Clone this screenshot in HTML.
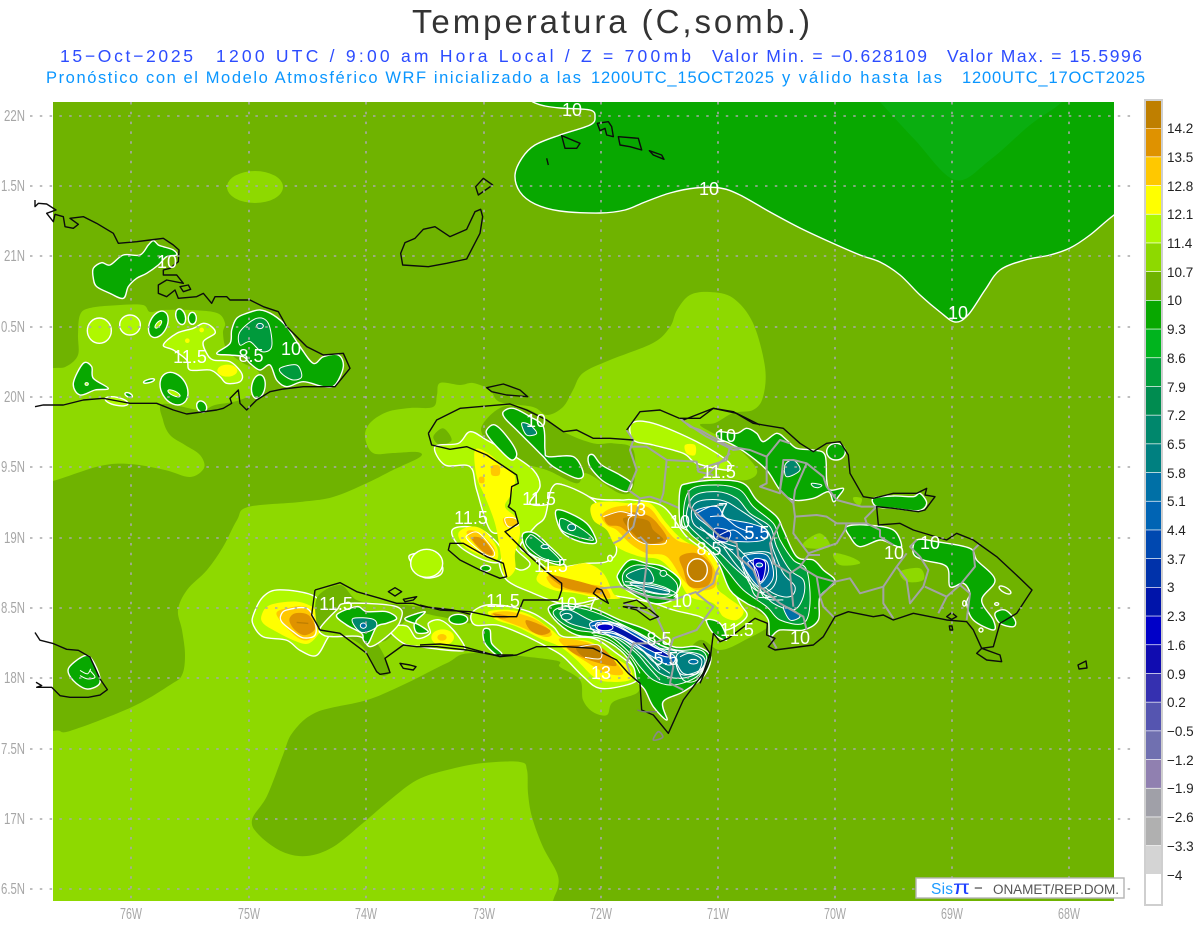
<!DOCTYPE html>
<html><head><meta charset="utf-8"><title>Temperatura</title>
<style>
html,body{margin:0;padding:0;background:#fff;width:1200px;height:927px;overflow:hidden}
svg{display:block}
text{font-family:"Liberation Sans",sans-serif}
.w polygon,.w polyline,.w ellipse,.w path{stroke:#fff;stroke-width:1.4;stroke-linejoin:round;vector-effect:non-scaling-stroke}
.n polygon,.n ellipse,.n path{stroke:none}
.t polygon,.t polyline,.t ellipse,.t path{stroke:#fff;stroke-width:1;fill-opacity:1;stroke-linejoin:round;vector-effect:non-scaling-stroke}
.l polyline,.l path,.l polygon{fill:none;stroke:#fff;stroke-width:1;vector-effect:non-scaling-stroke;stroke-linejoin:round}
.r polyline{fill:none;stroke:#a3a3a3;stroke-width:2;vector-effect:non-scaling-stroke;stroke-linejoin:round}
.k polyline,.k polygon{fill:none;stroke:#0c0c0c;stroke-width:1.4;vector-effect:non-scaling-stroke;stroke-linejoin:round}
.lb text{fill:#fff;font-size:18px;text-anchor:middle}
.ax text{fill:#a6a6a6;font-size:16px}
.cb text{fill:#222;font-size:13.5px}
</style></head><body>
<svg width="1200" height="927" viewBox="0 0 1200 927" xmlns="http://www.w3.org/2000/svg">
<defs><clipPath id="m"><rect x="53" y="102" width="1061" height="799"/></clipPath></defs>
<rect width="1200" height="927" fill="#fff"/>
<text x="412" y="33" font-size="33" fill="#333" textLength="398" lengthAdjust="spacing">Temperatura (C,somb.)</text>
<g font-size="17.5" fill="#2c4cff">
<text x="60" y="62" textLength="133" lengthAdjust="spacing">15−Oct−2025</text>
<text x="216" y="62" textLength="475" lengthAdjust="spacing">1200 UTC / 9:00 am Hora Local / Z = 700mb</text>
<text x="712" y="62" textLength="215" lengthAdjust="spacing">Valor Min. = −0.628109</text>
<text x="947" y="62" textLength="195" lengthAdjust="spacing">Valor Max. = 15.5996</text>
</g>
<g font-size="16.5" fill="#0a96ff">
<text x="46" y="83" textLength="535" lengthAdjust="spacing">Pronóstico con el Modelo Atmosférico WRF inicializado a las</text>
<text x="591" y="83" textLength="183" lengthAdjust="spacing">1200UTC_15OCT2025</text>
<text x="782" y="83" textLength="160" lengthAdjust="spacing">y válido hasta las</text>
<text x="962" y="83" textLength="183" lengthAdjust="spacing">1200UTC_17OCT2025</text>
</g>

<!-- map base -->
<rect x="53" y="102" width="1061" height="799" fill="#6fb300"/>
<g clip-path="url(#m)">
<polygon fill="#08a800" points="520,92 533,102 545,106 560,108 590,110 595,117 590,125 560,135 535,145 522,158 515,175 520,192 535,204 560,211 600,213 625,210 645,202 670,193 695,188 720,188 740,195 770,212 800,228 830,242 860,255 880,262 900,275 920,295 940,312 955,322 968,315 985,290 1000,270 1025,260 1050,255 1070,248 1090,235 1114,215 1150,190 1150,60 520,60"/>
<polygon fill="#0aae10" points="850,70 880,102 915,140 955,180 990,160 1030,125 1062,102 1090,70"/>
<polyline fill="none" stroke="#fff" stroke-width="1.4" points="520,92 533,102 545,106 560,108 590,110 595,117 590,125 560,135 535,145 522,158 515,175 520,192 535,204 560,211 600,213 625,210 645,202 670,193 695,188 720,188 740,195 770,212 800,228 830,242 860,255 880,262 900,275 920,295 940,312 955,322 968,315 985,290 1000,270 1025,260 1050,255 1070,248 1090,235 1114,215 1150,190"/>

<!-- light region -->
<g fill="#8ed900">
<ellipse cx="255" cy="187" rx="28" ry="16"/>
<polygon points="0,368 53,368 67,366 78,355 78,335 80,315 90,308 120,305 143,305 150,312 163,310 190,310 217,313 225,323 223,333 227,350 243,363 257,370 263,387 240,400 215,405 200,410 163,404 163,420 170,435 185,445 200,455 204,468 190,477 165,470 130,464 100,466 53,481 0,495"/>
<polygon points="0,745 53,731 70,731 132,707 170,685 182,675 185,655 182,630 178,610 187,590 207,570 223,547 237,520 248,507 300,502 333,497 367,483 393,470 420,457 417,452 393,453 373,453 365,437 370,423 387,412 410,408 433,407 437,395 440,383 460,385 473,383 490,390 500,402 533,407 547,415 563,407 573,390 583,373 610,360 653,343 670,327 677,310 690,295 710,292 733,298 753,323 765,367 763,397 753,410 733,413 715,423 700,425 720,437 740,450 757,470 747,480 717,482 700,520 718,563 747,603 770,623 745,640 720,650 700,640 680,660 655,680 643,680 637,693 613,702 607,715 593,712 583,700 580,680 560,667 553,660 473,653 447,663 407,683 367,700 317,712 293,732 283,755 267,796 252,820 260,836 283,852 307,856 333,847 363,823 390,800 417,780 447,770 483,763 520,762 527,770 528,793 532,817 543,847 557,873 558,887 553,901 548,925 0,925"/>
</g>
</g>

<!-- Cuba -->
<g transform="translate(30,190) scale(.33333)">
<g class="w">
<polygon fill="#08a800" points="190,235 215,218 240,225 280,195 330,195 355,165 370,152 385,165 400,170 430,180 440,195 410,200 385,225 350,250 320,265 295,290 280,325 240,310 200,290 190,265"/>
<ellipse fill="#aff800" cx="208" cy="422" rx="36" ry="38"/>
<ellipse fill="#aff800" cx="300" cy="405" rx="31" ry="30"/>
<ellipse fill="#08a800" cx="385" cy="403" rx="26" ry="42" transform="rotate(25 385 403)"/>
<ellipse fill="#08a800" cx="452" cy="380" rx="14" ry="24" transform="rotate(-15 452 380)"/>
<ellipse fill="#08a800" cx="487" cy="385" rx="12" ry="18"/>
<polygon fill="#aff800" points="400,465 440,430 490,415 520,400 545,410 555,430 520,455 530,490 550,510 600,515 635,550 630,575 590,580 570,560 540,540 480,540 470,510 430,480"/>
</g>
<g class="n" fill="#ffff00"><ellipse cx="592" cy="542" rx="30" ry="18"/><ellipse cx="472" cy="452" rx="7" ry="7"/><ellipse cx="515" cy="420" rx="7" ry="7"/></g>
<g class="w">
<polygon fill="#08a800" points="560,490 600,460 605,420 620,385 650,370 690,360 730,375 770,410 810,470 850,520 880,500 925,495 940,530 915,585 880,590 820,575 770,590 740,570 720,525 690,540 660,520 640,500 600,495"/>
<polygon fill="#08a800" points="130,580 160,520 185,530 190,565 235,595 195,600 150,615"/>
<ellipse fill="#08a800" cx="432" cy="596" rx="38" ry="52" transform="rotate(-30 432 596)"/>
<ellipse fill="#08a800" cx="685" cy="590" rx="20" ry="36" transform="rotate(10 685 590)"/>
<ellipse fill="#08a800" cx="515" cy="650" rx="14" ry="18" transform="rotate(-30 515 650)"/>
<ellipse fill="#08a800" cx="357" cy="573" rx="17" ry="5" transform="rotate(-15 357 573)"/>
<ellipse fill="#08a800" cx="296" cy="615" rx="12" ry="6" transform="rotate(25 296 615)"/>
<ellipse fill="#aff800" cx="260" cy="634" rx="35" ry="12" transform="rotate(12 260 634)"/>
</g>
<g class="t">
<polygon fill="#009a3c" points="630,425 680,385 715,400 725,470 695,485 660,455 630,465"/>
<polygon fill="#009a3c" points="750,535 800,525 815,560 790,570 760,555"/>
<ellipse fill="#00876c" cx="690" cy="408" rx="10" ry="8"/>
<ellipse fill="#aff800" cx="432" cy="610" rx="20" ry="7" transform="rotate(25 432 610)"/>
<ellipse fill="#aff800" cx="385" cy="403" rx="6" ry="14" transform="rotate(40 385 403)"/>
<ellipse fill="#aff800" cx="170" cy="582" rx="5" ry="4"/>
</g>
<g class="k"><polyline points="15,30 15,50 25,40 50,42 78,60 50,70 70,95 75,73 100,80 105,110 130,115 145,103 120,85 160,80 200,100 250,130 265,160 320,155 360,150 400,145 430,165 447,180 445,215 420,235 400,240 400,255 440,255 460,280 410,270 385,285 385,310 410,320 435,300 445,325 500,320 520,310 545,340 555,320 590,320 600,330 660,330 700,350 745,365 770,410 830,470 880,495 940,490 960,535 915,590 820,590 760,597 720,605 680,630 650,660 630,640 625,600 600,625 605,640 580,655 560,660 470,672 430,660 380,640 300,640 220,625 160,630 100,645 40,645 15,650"/>
<polygon points="450,290 475,285 482,298 460,305"/></g>
</g>

<!-- Jamaica -->
<g transform="translate(0,400) scale(.33333,.336)">
<g class="w"><polygon fill="#08a800" points="205,800 245,765 270,765 295,810 298,845 260,860 220,835"/></g>
<g class="l"><polyline points="240,805 262,815 272,800"/><polyline points="240,820 262,830 285,825 270,805"/></g>
<g class="k"><polyline points="105,692 120,715 160,725 200,742 235,745 270,765 300,830 322,862 300,878 265,885 210,885 180,880 155,855 110,855 125,850 108,840"/></g>
</g>

<!-- SW Haiti -->
<g transform="translate(0,400) scale(.33333,.336)">
<g class="w"><polygon fill="#aff800" points="760,640 790,585 840,565 945,585 975,650 1030,695 990,700 950,760 900,745 860,715 790,705 760,670"/></g>
<g fill="#ffff00"><polygon points="785,640 810,610 890,600 945,620 975,650 960,690 925,725 880,715 830,690 790,665"/></g>
<g fill="#ffc800"><polygon points="830,640 860,620 920,618 950,670 930,712 890,705"/></g>
<polygon fill="#df9200" points="868,655 885,635 925,640 945,680 915,700 885,685"/>
<polygon fill="none" stroke="#fff" stroke-width="4" points="843,640 860,625 920,620 945,660 945,700 910,708 880,690 845,660"/>
<polyline fill="none" stroke="#bf7f00" stroke-width="4" points="890,662 925,665"/>
</g>
<g transform="translate(240,540) scale(.33333)">
<polygon fill="#6fb300" points="230,175 300,135 350,180 420,190 500,195 600,210 690,225 690,250 600,230 520,225 440,300 400,310 445,395 415,400 380,335 340,300 260,270 235,270"/>
<polygon fill="#6fb300" points="380,300 405,300 450,390 415,400"/>
<g class="w">
<polygon fill="#aff800" points="445,265 500,258 530,295 570,280 565,250 600,240 640,270 675,325 640,332 540,320 490,310"/>
<polygon fill="#aff800" points="510,45 560,42 605,75 600,105 550,112 515,70"/>
<polygon fill="#8ed900" points="240,265 290,210 320,190 470,200 480,245 440,290 390,320 360,290 280,290 250,285"/>
<polygon fill="#08a800" points="290,225 350,200 380,215 440,215 470,235 440,250 410,260 385,310 370,300 365,280 320,255"/>
<polygon fill="#08a800" points="495,235 555,215 530,240 525,250"/>
<polygon fill="#08a800" points="525,250 565,275 530,278"/>
<ellipse fill="#08a800" cx="655" cy="238" rx="28" ry="15"/>
<polygon fill="#08a800" points="730,270 750,270 755,310 785,340 770,345 735,310"/>
</g>
<ellipse fill="#ffff00" cx="608" cy="292" rx="34" ry="24"/><ellipse fill="#ffc800" cx="606" cy="292" rx="14" ry="10"/>
<g class="t"><polygon fill="#00876c" points="340,235 400,238 408,262 370,278 345,260"/><ellipse fill="#0070a6" cx="370" cy="257" rx="9" ry="8"/></g>
<g class="k">
<polyline points="225,150 300,128 350,155 420,175 470,190 520,190 550,200 640,210 700,225"/>
<polyline points="225,150 215,225 240,270 300,280 340,310 380,340 410,395 420,403 450,398 435,355 490,315 530,320 590,320 680,330 760,345 820,345"/>
<polygon points="445,155 465,143 485,155 465,168"/><polygon points="480,370 510,375 528,380 520,390 490,385"/><polygon points="490,178 530,170 520,180 495,185"/>
</g>
</g>

<!-- central Hispaniola -->
<g transform="translate(420,390) scale(.33333)">
<polygon fill="#6fb300" points="190,100 250,50 330,60 430,125 520,160 580,160 640,180 640,290 600,310 500,250 470,280 380,240 300,220 240,205 190,140"/>
<polygon fill="#6fb300" points="40,140 70,115 95,150 60,165"/>
<g class="w">
<polygon fill="#aff800" points="45,170 115,160 150,125 200,150 270,190 340,240 360,290 330,340 390,340 400,290 430,285 520,325 600,330 640,330 730,350 800,440 880,500 920,560 960,640 980,680 920,720 870,700 840,680 760,660 700,640 600,620 560,620 480,640 420,640 340,610 260,570 240,510 300,540 330,520 290,480 260,430 210,420 170,300 150,230 75,225"/>
<polygon fill="#aff800" points="95,425 125,410 185,420 240,470 240,515 190,510 120,470"/>
<polygon fill="#aff800" points="155,670 200,645 270,650 340,670 400,710 430,740 520,745 590,790 640,830 655,865 620,885 540,895 490,860 430,800 380,770 300,730 230,705 165,705"/>
<polygon fill="#8ed900" points="300,470 345,410 375,380 395,295 430,285 520,330 560,400 590,480 560,515 500,520 440,530 390,540 340,500"/>
<ellipse fill="#aff800" cx="570" cy="505" rx="7" ry="9"/>
<polygon fill="#aff800" points="635,100 700,100 830,155 925,215 920,240 830,220 790,190 700,165 640,150"/>
<ellipse fill="#aff800" cx="20" cy="520" rx="48" ry="42"/>
</g>
<g fill="#ffff00">
<polygon points="165,180 205,190 250,230 285,260 275,310 255,350 290,385 300,430 285,490 285,540 255,560 240,480 225,400 195,320 170,260"/>
<polygon points="115,430 150,410 190,420 230,470 230,510 190,500 135,470"/>
<polygon points="515,345 570,335 630,340 690,340 740,400 790,450 870,490 900,530 890,590 920,620 970,660 950,690 910,680 880,640 810,620 770,560 720,510 660,500 590,470 560,420 520,390"/>
<polygon points="205,665 270,660 330,675 395,720 430,745 510,755 580,800 630,835 630,870 560,875 520,860 470,810 420,770 360,745 290,710 230,690"/>
<polygon points="440,530 500,520 550,550 580,610 600,625 540,625 470,610 400,600 350,570 380,530"/>
<polygon points="795,165 825,165 825,195 800,190"/>
</g>
<g fill="#ffc800">
<polygon points="215,228 238,228 238,255 215,255"/>
<polygon points="178,262 192,262 192,278 178,278"/>
<polygon points="250,385 285,385 295,405 260,410"/>
<polygon points="140,430 170,425 220,470 220,498 190,490"/>
<polygon points="545,375 590,350 680,350 725,400 770,450 830,470 880,530 885,590 830,600 790,570 740,500 680,490 630,460 590,420 560,405"/>
<polygon points="215,670 270,665 350,690 395,730 370,740 300,710 235,685"/>
<polygon points="420,745 510,760 570,800 610,850 560,850 490,810 440,775"/>
<polygon points="380,560 420,565 470,580 550,590 570,625 520,615 440,600 400,590"/>
</g>
<g fill="#df9200">
<polygon points="555,380 600,365 680,375 720,410 740,450 690,465 640,440 600,410 565,405"/>
<polygon points="780,500 830,490 875,530 865,585 810,590 790,540"/>
<polygon points="220,670 270,680 240,685"/>
<polygon points="320,690 390,720 365,735 330,720"/>
<polygon points="440,770 470,765 540,770 590,825 540,820 470,795"/>
<polygon points="385,555 420,560 530,590 540,610 440,595"/>
<polygon points="155,445 185,445 215,480 215,495 190,485"/>
</g>
<g fill="#bf7f00">
<polygon points="610,385 680,390 700,420 730,450 680,460 640,430"/>
<ellipse cx="832" cy="540" rx="28" ry="32"/>
<polygon points="470,770 535,765 540,805 490,800"/>
</g>
<g class="l">
<polyline points="550,380 600,365 640,375"/>
<polyline points="640,375 625,390 630,430 670,460 730,462 740,450"/>
<ellipse fill="none" stroke="#fff" stroke-width="4" cx="832" cy="540" rx="30" ry="34"/>
<polygon points="143,435 175,428 220,480 218,500 190,490 143,450"/>
<polyline points="470,772 535,765 542,805 495,802"/>
<polygon points="255,385 285,385 295,405 265,410"/>
</g>
<g class="w" fill="#08a800">
<polygon points="250,65 280,55 330,80 370,110 375,180 385,200 460,200 490,250 470,265 400,230 370,200 340,170 290,120 255,85"/>
<polygon points="200,120 225,105 265,145 290,190 275,210 240,180 205,140"/>
<polygon points="505,200 520,195 545,225 600,255 635,280 620,305 580,290 545,270 510,230"/>
<polygon points="410,360 450,370 500,400 525,440 525,460 480,455 430,430 410,390"/>
<polygon points="310,430 345,430 390,470 430,510 420,525 370,510 330,490 310,460"/>
<polygon points="595,550 630,510 680,520 730,530 780,570 770,610 760,630 700,640 620,600 595,570"/>
<ellipse cx="197" cy="535" rx="15" ry="9"/>
<polygon points="860,690 900,700 920,750 880,730"/>
<polygon points="385,655 430,640 520,655 600,690 680,720 760,770 830,770 872,800 850,860 790,905 729,936 741,990 700,950 675,900 650,870 640,830 600,780 540,745 470,735 415,700"/>
</g>
<g class="t">
<polygon fill="#009e3c" points="400,665 440,650 520,665 620,710 700,755 770,780 840,780 860,810 830,860 760,885 700,870 660,830 620,780 560,735 470,720 420,695"/>
<polygon fill="#00876c" points="420,670 450,660 510,690 600,725 700,770 790,785 850,800 840,845 780,865 720,850 670,800 610,750 540,725 450,700"/>
<polygon fill="#007f80" points="775,790 830,790 855,810 840,840 790,855 770,830"/>
<polygon fill="#0064b4" points="510,700 560,692 640,725 720,775 765,800 745,825 680,790 600,745 530,728"/>
<polygon fill="#0014aa" points="530,700 580,705 650,740 745,795 720,795 640,755 580,725 535,720"/>
<ellipse fill="#0000c8" cx="555" cy="712" rx="24" ry="10"/>
<ellipse fill="#00876c" cx="440" cy="680" rx="16" ry="10"/>
<ellipse fill="#0070a6" cx="820" cy="815" rx="14" ry="7"/>
<polygon fill="#009e3c" points="610,550 650,525 720,540 770,580 760,615 700,620 620,590"/>
<polygon fill="#00876c" points="620,555 680,535 700,575 650,575"/>
<polygon fill="#007f80" points="630,580 690,585 745,600 740,612 690,605"/>
<polygon fill="#009e3c" points="325,440 345,440 420,510 370,505 320,465"/>
<polygon fill="#009e3c" points="425,385 490,420 520,450 470,440 425,420"/>
<ellipse fill="#00876c" cx="455" cy="412" rx="12" ry="10"/>
<ellipse fill="#00876c" cx="375" cy="470" rx="12" ry="6"/>
<ellipse fill="#009e3c" cx="730" cy="550" rx="10" ry="9"/>
<polygon fill="#00876c" points="305,100 330,105 350,130 320,135"/>
</g>
<g class="l">
<polyline points="515,730 570,728 640,760 690,800 720,840"/>
<polyline points="520,725 600,735 660,775 700,815 750,850"/>
<polyline points="510,715 590,745 650,790 680,825 720,870"/>
<polyline points="515,708 580,700 640,735 700,770 750,795"/>
<polyline points="530,698 590,700 650,725 720,765 770,785"/>
<polyline points="520,735 570,750 630,800 660,850"/>
<polyline points="610,585 680,590 750,605"/>
<polyline points="620,590 700,610 760,615"/>
<polyline points="615,575 690,580 730,590 770,610"/>
<polyline points="430,645 470,650 520,640"/>
<polyline points="780,800 810,790 845,810 830,850 790,850 770,820"/>
<polyline points="765,815 790,870 830,870 860,820"/>
</g>
<g class="r">
<polyline points="620,120 640,150 630,180 650,240 625,300 660,325 640,410 600,450 580,460"/>
<polyline points="630,170 680,170 740,210 830,215 835,245 880,255"/>
<polyline points="740,210 730,310 720,340"/>
<polyline points="690,320 720,330 745,340 790,360 830,390 880,420 920,490 890,545 880,580 830,610 880,650 830,720 760,745 745,790 760,830 750,880 790,900"/>
<polyline points="790,350 810,290 850,265 930,190"/>
<polyline points="800,100 860,140 940,180 1020,170"/>
<polyline points="660,440 680,460 680,520 670,600 680,625 710,680 740,745 700,760 640,760 620,820"/>
<polyline points="540,595 600,590 680,620 760,630 830,605"/>
<polyline points="610,640 640,650 720,685"/>
<polyline points="660,325 690,320"/>
<polyline points="620,820 630,850"/>
</g>
<g class="k">
<polyline points="25,130 50,90 120,55 270,42 320,60 380,90 430,125 470,120 520,145 570,145 640,150"/>
<polyline points="620,120 660,65 720,60 790,90 880,55 950,70 1020,105"/>
<polyline points="25,130 35,165 90,178 140,170 200,195 290,255 295,280 275,290 270,340 265,350 285,365 295,400 265,420 255,425 320,490 380,545 425,580 425,600 415,630 340,630 310,630 290,680 220,680 150,665 60,660 0,645"/>
<polyline points="0,765 60,762 130,770 240,800 290,795 350,770 440,770 520,775 590,810 625,850 660,880 665,960 700,975 745,1030 790,930 850,850 870,790 850,760"/>
<polygon points="90,460 130,460 200,500 250,520 260,560 240,565 180,540 120,510 85,480"/>
<polygon points="530,595 545,600 565,640 540,625 520,610"/>
<polyline points="610,640 650,630 690,660 715,680 690,690 650,660 610,650 680,655"/>
</g>
</g>

<!-- eastern DR -->
<g transform="translate(680,390) scale(.33333)">
<g fill="#8ed900"><polygon points="370,460 420,430 450,470 390,475"/><polygon points="460,490 510,500 540,520 480,525"/><polygon points="660,545 720,535 730,570 680,575"/><polygon points="520,322 545,325 540,345 525,338"/></g>
<g class="w" fill="#08a800">
<polygon points="115,125 170,130 200,115 230,130 250,155 290,130 320,150 350,175 400,180 435,195 440,270 450,300 490,295 475,320 460,335 445,305 400,325 340,330 300,300 260,240 200,190 150,160 115,145"/>
<ellipse cx="468" cy="185" rx="28" ry="25"/>
<polygon points="580,325 640,318 700,320 720,310 740,340 715,362 640,355 590,350"/>
<polygon points="500,410 560,405 640,420 665,470 640,465 600,450 540,470 510,440"/>
<polygon points="710,450 770,455 870,475 890,510 945,570 905,630 940,690 940,720 880,690 860,640 870,610 850,580 810,590 800,530 730,510 700,490"/>
<polygon points="945,670 975,660 1005,690 1000,710 960,700"/>
<polygon points="25,280 110,270 190,280 230,330 290,380 310,420 350,500 400,510 430,540 465,575 420,620 415,690 370,720 300,720 270,740 265,690 240,660 200,640 150,600 115,520 60,450 20,420 0,400 0,300"/>
</g>
<g class="t">
<polygon fill="#009e3c" points="30,300 110,285 180,300 220,350 280,400 300,450 340,510 380,540 390,640 370,700 300,690 260,650 190,600 140,540 90,480 30,430 10,380"/>
<polygon fill="#00876c" points="40,320 110,305 170,325 210,370 270,410 290,470 330,540 370,570 370,620 340,660 280,640 240,600 160,530 120,490 60,440 20,390"/>
<polygon fill="#007f80" points="45,340 120,330 180,360 260,420 280,480 310,550 345,590 330,620 280,610 220,560 160,490 100,440 40,400"/>
<polygon fill="#0064b4" points="50,360 110,350 140,385 210,400 260,420 250,450 180,455 130,445 80,405 50,380"/>
<polygon fill="#0070a6" points="190,500 260,495 280,560 245,595 200,545"/>
<polygon fill="#0032aa" points="105,415 150,425 140,455 105,445"/>
<polygon fill="#0032aa" points="205,515 255,510 265,545 240,580 220,540"/>
<polygon fill="#0000c8" points="220,510 255,515 250,565 235,570"/>
<ellipse fill="#0070a6" cx="238" cy="525" rx="10" ry="6"/>
<polygon fill="#0070a6" points="310,650 340,660 360,680 330,690"/>
<polygon fill="#00876c" points="340,210 360,240 320,260 315,225"/>
<polygon fill="#009e3c" points="395,280 425,285 415,293 400,290"/>
</g>
<g class="l">
<polyline points="170,470 230,540 250,620 310,630"/>
<polyline points="180,510 215,590 280,625"/>
<polyline points="90,380 130,380 170,410 220,430"/>
<polyline points="60,410 110,450 170,470"/>
<polyline points="50,370 90,350 130,345"/>
<polyline points="110,440 160,420 200,450"/>
<polyline points="190,490 270,490 290,560 270,600 230,600 190,530"/>
<polyline points="210,580 230,620 290,620"/>
<polyline points="70,420 120,465 160,480"/>
<polyline points="130,470 165,520 210,570"/>
</g>
<g class="w" fill="none"><ellipse fill="none" cx="975" cy="600" rx="20" ry="8" transform="rotate(30 975 600)"/><ellipse fill="none" cx="853" cy="640" rx="5" ry="8"/><ellipse fill="none" cx="903" cy="720" rx="6" ry="6"/><ellipse fill="none" cx="950" cy="642" rx="6" ry="4"/></g>
<g class="r">
<polyline points="0,85 30,110 60,120 150,170 210,180 260,200 300,150 330,160"/>
<polyline points="150,170 140,210 50,240"/>
<polyline points="260,200 260,280 240,290 300,310 300,300 310,210 340,210 380,220 430,260 440,290 470,330 545,350 590,350 555,385 560,400 600,420 600,440 640,465"/>
<polyline points="310,240 300,300 340,340 345,380 340,430 385,490 470,460 495,420 500,400 560,400"/>
<polyline points="345,380 410,375 440,380 470,400 500,400"/>
<polyline points="380,220 345,300 340,340"/>
<polyline points="25,300 30,350 80,400 120,440 170,460 175,500 220,540 240,590 230,630"/>
<polyline points="300,400 270,460 280,520 330,550 360,530 385,495 420,495"/>
<polyline points="360,530 410,560 420,620 430,650 465,685"/>
<polyline points="410,560 465,575 510,565 540,610 610,590 610,640 640,685"/>
<polyline points="465,575 420,620"/>
<polyline points="610,590 650,530 680,570 690,640 730,590 745,540 720,500 690,470 710,450"/>
<polyline points="650,530 680,490"/>
<polyline points="735,590 800,620 775,670"/>
<polyline points="800,620 840,585 870,610 860,690"/>
<polyline points="840,585 885,530 880,480 900,460"/>
<polyline points="240,590 300,640 370,680 380,720"/>
<polyline points="330,550 340,650"/>
<polyline points="270,740 290,775"/>
</g>
<g class="k">
<polyline points="0,85 60,85 100,55 160,65 220,100 310,115 360,160 400,185 440,160 480,155 505,195 510,250 550,320 580,325 640,310 710,310 740,295 735,315 765,320 735,360 715,365 640,355 590,350 595,405 660,400 700,420 800,450 830,430 880,450 950,500 1020,565 1056,600 1010,670 960,700 940,770 905,775 880,720 860,695 800,690 700,670 640,690 610,675 580,680 505,665 465,680 430,740 400,765 285,780 265,770 285,745 260,735 262,700 225,685 145,745 120,755 100,730 90,810 60,880"/>
<polygon points="890,790 905,775 960,795 965,815 920,810"/>
<polygon points="800,680 815,668 830,680 815,688"/><polygon points="808,708 816,708 818,720 810,720"/>
</g>
</g>

<!-- northern islands -->
<g transform="translate(360,90) scale(.33333)" class="k">
<polygon points="122,490 135,458 165,445 190,418 225,410 270,440 320,418 345,365 362,358 368,380 360,430 320,507 260,520 205,530 128,525"/>
<polygon points="347,290 370,265 398,285 355,315"/>
<polygon points="712,100 745,95 755,110 760,140 740,135 735,115 720,122"/>
<polygon points="775,140 835,145 845,180 810,170 780,165"/>
<polygon points="868,182 905,195 912,208 880,195"/>
<polygon points="605,137 660,160 650,175 615,175"/>
<polyline points="560,205 565,225"/>
<polygon points="380,893 430,882 480,900 503,920 440,915 395,905"/>
</g>
<g transform="translate(380,660) scale(.33333)"><polygon points="820,240 835,215 848,232" fill="none" stroke="#888" stroke-width="5"/><polyline points="772,150 790,155 830,155" fill="none" stroke="#777" stroke-width="4"/></g>
<g class="k"><polygon points="1078,665 1086,661 1087,668 1079,669"/></g>

<!-- grid -->
<g fill="none" stroke="#a9a9a9" stroke-width="1.6" stroke-dasharray="2.5 7.3">
<path d="M30 116H1135M30 186H1135M30 256H1135M30 327H1135M30 397H1135M30 467H1135M30 538H1135M30 608H1135M30 678H1135M30 749H1135M30 819H1135M30 889H1135"/>
<path d="M131 102V905M249 102V905M366 102V905M484 102V905M601 102V905M718 102V905M835 102V905M952 102V905M1069 102V905"/>
</g>

<!-- contour labels -->
<g class="lb">
<text x="572" y="116">10</text><text x="709" y="195">10</text><text x="958" y="319">10</text>
<text x="167" y="268">10</text><text x="190" y="363">11.5</text><text x="251" y="362">8.5</text><text x="291" y="355">10</text>
<text x="536" y="427">10</text><text x="726" y="442">10</text><text x="719" y="478">11.5</text>
<text x="539" y="505">11.5</text><text x="471" y="524">11.5</text><text x="636" y="516">13</text>
<text x="680" y="528">10</text><text x="723" y="516">7</text><text x="757" y="539">5.5</text>
<text x="709" y="555">8.5</text><text x="551" y="572">11.5</text><text x="336" y="610">11.5</text>
<text x="503" y="607">11.5</text><text x="682" y="607">10</text><text x="567" y="610">10</text><text x="592" y="610">7</text>
<text x="659" y="645">8.5</text><text x="666" y="665">5.5</text><text x="737" y="636">11.5</text>
<text x="800" y="644">10</text><text x="601" y="679">13</text><text x="894" y="559">10</text><text x="930" y="549">10</text>
</g>

<!-- axes -->
<g class="ax">
<text x="4" y="121" textLength="21" lengthAdjust="spacingAndGlyphs">22N</text><text x="1" y="191" textLength="24" lengthAdjust="spacingAndGlyphs">1.5N</text><text x="4" y="261" textLength="21" lengthAdjust="spacingAndGlyphs">21N</text><text x="1" y="332" textLength="24" lengthAdjust="spacingAndGlyphs">0.5N</text><text x="4" y="402" textLength="21" lengthAdjust="spacingAndGlyphs">20N</text><text x="1" y="472" textLength="24" lengthAdjust="spacingAndGlyphs">9.5N</text><text x="4" y="543" textLength="21" lengthAdjust="spacingAndGlyphs">19N</text><text x="1" y="613" textLength="24" lengthAdjust="spacingAndGlyphs">8.5N</text><text x="4" y="683" textLength="21" lengthAdjust="spacingAndGlyphs">18N</text><text x="1" y="754" textLength="24" lengthAdjust="spacingAndGlyphs">7.5N</text><text x="4" y="824" textLength="21" lengthAdjust="spacingAndGlyphs">17N</text><text x="1" y="894" textLength="24" lengthAdjust="spacingAndGlyphs">6.5N</text>
<text x="120" y="919" textLength="22" lengthAdjust="spacingAndGlyphs">76W</text><text x="238" y="919" textLength="22" lengthAdjust="spacingAndGlyphs">75W</text><text x="355" y="919" textLength="22" lengthAdjust="spacingAndGlyphs">74W</text><text x="473" y="919" textLength="22" lengthAdjust="spacingAndGlyphs">73W</text><text x="590" y="919" textLength="22" lengthAdjust="spacingAndGlyphs">72W</text><text x="707" y="919" textLength="22" lengthAdjust="spacingAndGlyphs">71W</text><text x="824" y="919" textLength="22" lengthAdjust="spacingAndGlyphs">70W</text><text x="941" y="919" textLength="22" lengthAdjust="spacingAndGlyphs">69W</text><text x="1058" y="919" textLength="22" lengthAdjust="spacingAndGlyphs">68W</text>
</g>

<!-- logo box -->
<rect x="916" y="878" width="208" height="20" fill="#fff" stroke="#b4b4b4" stroke-width="1.4"/>
<text x="931" y="894" font-size="15.5" fill="#1e9bff" textLength="22">Sis</text>
<text x="953" y="894" font-size="19" fill="#2040ff" textLength="17" lengthAdjust="spacingAndGlyphs">π</text>
<text x="974" y="893" font-size="15" fill="#333">−</text>
<text x="993" y="894" font-size="13.5" fill="#555" textLength="126" lengthAdjust="spacing">ONAMET/REP.DOM.</text>

<!-- colorbar -->
<rect x="1145" y="100" width="17" height="805" fill="#fff" stroke="#cfcfcf" stroke-width="2"/>
<g>
<rect x="1146" y="101" width="15" height="27" fill="#bf7f00"/>
<rect x="1146" y="128.5" width="15" height="28" fill="#df9200"/>
<rect x="1146" y="157.2" width="15" height="28" fill="#ffc800"/>
<rect x="1146" y="185.9" width="15" height="28" fill="#ffff00"/>
<rect x="1146" y="214.6" width="15" height="28" fill="#aff800"/>
<rect x="1146" y="243.3" width="15" height="28" fill="#8ed900"/>
<rect x="1146" y="272" width="15" height="28" fill="#6fb300"/>
<rect x="1146" y="300.7" width="15" height="28" fill="#08a800"/>
<rect x="1146" y="329.4" width="15" height="28" fill="#00b41e"/>
<rect x="1146" y="358.1" width="15" height="28" fill="#009e3c"/>
<rect x="1146" y="386.8" width="15" height="28" fill="#008c50"/>
<rect x="1146" y="415.5" width="15" height="28" fill="#00876c"/>
<rect x="1146" y="444.2" width="15" height="28" fill="#008080"/>
<rect x="1146" y="472.9" width="15" height="28" fill="#0070a6"/>
<rect x="1146" y="501.6" width="15" height="28" fill="#0064b4"/>
<rect x="1146" y="530.3" width="15" height="28" fill="#0048b0"/>
<rect x="1146" y="559" width="15" height="28" fill="#0032aa"/>
<rect x="1146" y="587.7" width="15" height="28" fill="#0014aa"/>
<rect x="1146" y="616.4" width="15" height="28" fill="#0000c8"/>
<rect x="1146" y="645.1" width="15" height="28" fill="#100cb0"/>
<rect x="1146" y="673.8" width="15" height="28" fill="#3530b0"/>
<rect x="1146" y="702.5" width="15" height="28" fill="#5555b0"/>
<rect x="1146" y="731.2" width="15" height="28" fill="#7070b0"/>
<rect x="1146" y="759.9" width="15" height="28" fill="#9080b0"/>
<rect x="1146" y="788.6" width="15" height="28" fill="#a0a0a8"/>
<rect x="1146" y="817.3" width="15" height="28" fill="#b0b0b0"/>
<rect x="1146" y="846" width="15" height="28" fill="#d4d4d4"/>
</g>
<g class="cb">
<text x="1167" y="133">14.2</text><text x="1167" y="162">13.5</text><text x="1167" y="191">12.8</text><text x="1167" y="219">12.1</text><text x="1167" y="248">11.4</text><text x="1167" y="277">10.7</text><text x="1167" y="305">10</text><text x="1167" y="334">9.3</text><text x="1167" y="363">8.6</text><text x="1167" y="392">7.9</text><text x="1167" y="420">7.2</text><text x="1167" y="449">6.5</text><text x="1167" y="478">5.8</text><text x="1167" y="506">5.1</text><text x="1167" y="535">4.4</text><text x="1167" y="564">3.7</text><text x="1167" y="592">3</text><text x="1167" y="621">2.3</text><text x="1167" y="650">1.6</text><text x="1167" y="679">0.9</text><text x="1167" y="707">0.2</text><text x="1167" y="736">−0.5</text><text x="1167" y="765">−1.2</text><text x="1167" y="793">−1.9</text><text x="1167" y="822">−2.6</text><text x="1167" y="851">−3.3</text><text x="1167" y="880">−4</text>
</g>
</svg>
<script>
(function(){
var els=document.querySelectorAll('svg polygon,svg polyline');
for(var i=0;i<els.length;i++){
var e=els[i];
if(e.closest('.k,.r'))continue;
var raw=e.getAttribute('points').trim().split(/[\s,]+/).map(Number),p=[];
for(var j=0;j+1<raw.length;j+=2)p.push([raw[j],raw[j+1]]);
var n=p.length,closed=e.tagName.toLowerCase()==='polygon';
if(n<3)continue;
var g=function(k){return closed?p[(k+n)%n]:p[Math.max(0,Math.min(n-1,k))]};
var d='M'+p[0][0]+' '+p[0][1],m=closed?n:n-1;
for(var s=0;s<m;s++){
var a=g(s-1),b=g(s),c=g(s+1),f=g(s+2);
d+='C'+(b[0]+(c[0]-a[0])/6).toFixed(1)+' '+(b[1]+(c[1]-a[1])/6).toFixed(1)+' '+(c[0]-(f[0]-b[0])/6).toFixed(1)+' '+(c[1]-(f[1]-b[1])/6).toFixed(1)+' '+c[0]+' '+c[1];
}
if(closed)d+='Z';
var q=document.createElementNS('http://www.w3.org/2000/svg','path');
for(var t=0;t<e.attributes.length;t++){var at=e.attributes[t];if(at.name!=='points')q.setAttribute(at.name,at.value);}
q.setAttribute('d',d);
e.parentNode.replaceChild(q,e);
}
})();
</script>
</body></html>
